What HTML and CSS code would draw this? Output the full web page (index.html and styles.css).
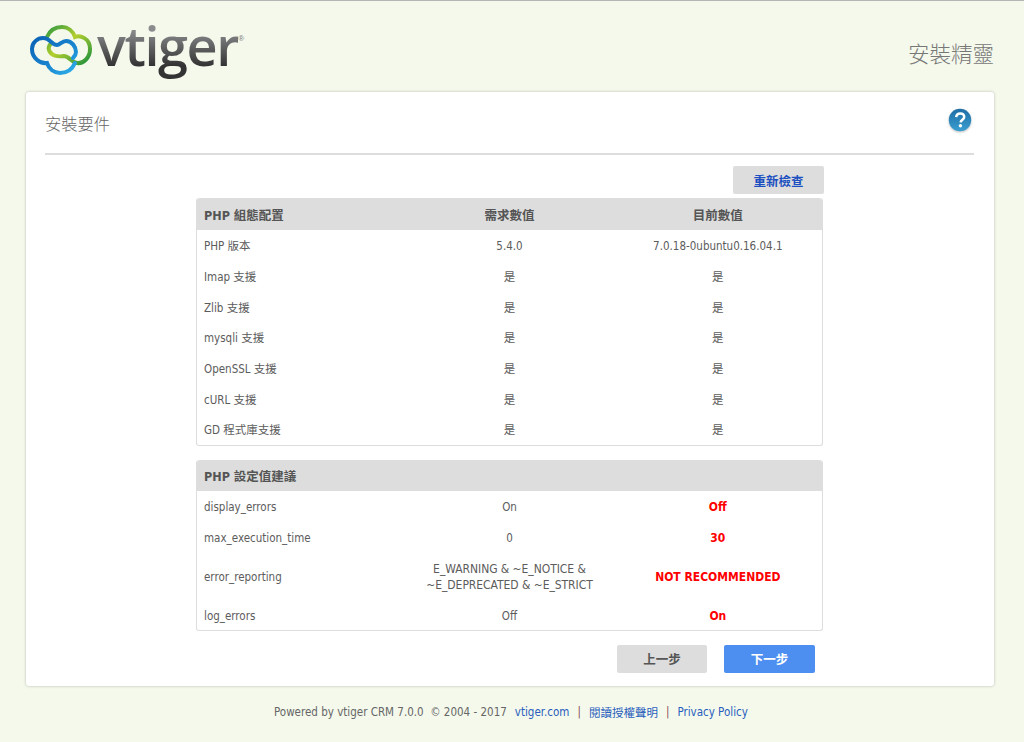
FILE: index.html
```html
<!DOCTYPE html>
<html lang="zh-Hant">
<head>
<meta charset="utf-8">
<title>安裝精靈</title>
<link rel="stylesheet" href="styles.css">
</head>
<body>
<header class="top">
  <div class="logo">
    <svg class="cloud" width="66" height="56" viewBox="29 25 66 56">
      <defs>
        <linearGradient id="g" x1="0" y1="0" x2="1" y2="1"><stop offset="0" stop-color="#2f9a3f"/><stop offset=".45" stop-color="#b4cf2e"/><stop offset="1" stop-color="#1c8f3c"/></linearGradient>
        <linearGradient id="b" x1="0" y1="0" x2="1" y2="1"><stop offset="0" stop-color="#0b62b5"/><stop offset=".6" stop-color="#1a86d0"/><stop offset="1" stop-color="#2fb2ea"/></linearGradient>
      </defs>
      <path d="M47 37C50 30 56 27 62 27C68 27 73 31 75 37C80 35 90 38 90 49C90 58 83 64 77 63C71 62 69 56 64 56C58 57 51 56 49 50C48 47 49 45 52 43" fill="none" stroke="url(#g)" stroke-width="4" stroke-linecap="round"/>
      <path d="M75 63C72 70 66 73 60 73C54 73 49 69 47 63C40 64 32 58 32 49C32 42 38 38 43 38C50 38 52 45 57 45C60 45 62 41 66 41C72 41 76 47 76 52C76 54 75 56 73 58" fill="none" stroke="url(#b)" stroke-width="4" stroke-linecap="round"/>
    </svg>
    <span class="word">vtiger</span><span class="reg">®</span>
  </div>
  <div class="wizard">安裝精靈</div>
</header>

<main class="card">
  <div class="card-head">
    <h1>安裝要件</h1>
    <svg class="help" width="24" height="24" viewBox="0 0 24 24">
      <defs><linearGradient id="h" x1="0" y1="0" x2="0" y2="1"><stop offset="0" stop-color="#1f6ea6"/><stop offset="1" stop-color="#3a9ed0"/></linearGradient></defs>
      <circle cx="12" cy="12" r="11.2" fill="url(#h)"/>
      <path d="M8.2 9.2C8.4 6.6 10 5.4 12.2 5.4C14.6 5.4 16.2 6.8 16.2 8.9C16.2 11.6 12.8 11.8 12.6 14.4" fill="none" stroke="#fff" stroke-width="2.5"/>
      <circle cx="12.4" cy="17.8" r="1.7" fill="#fff"/>
    </svg>
  </div>

  <div class="content">
    <div class="recheck-row"><a class="btn recheck">重新檢查</a></div>

    <table class="req">
      <thead><tr><th class="left">PHP 組態配置</th><th>需求數值</th><th>目前數值</th></tr></thead>
      <tbody>
        <tr><td class="left">PHP 版本</td><td>5.4.0</td><td>7.0.18-0ubuntu0.16.04.1</td></tr>
        <tr><td class="left">Imap 支援</td><td>是</td><td>是</td></tr>
        <tr><td class="left">Zlib 支援</td><td>是</td><td>是</td></tr>
        <tr><td class="left">mysqli 支援</td><td>是</td><td>是</td></tr>
        <tr><td class="left">OpenSSL 支援</td><td>是</td><td>是</td></tr>
        <tr><td class="left">cURL 支援</td><td>是</td><td>是</td></tr>
        <tr><td class="left">GD 程式庫支援</td><td>是</td><td>是</td></tr>
      </tbody>
    </table>

    <table class="req second">
      <thead><tr><th class="left">PHP 設定值建議</th><th></th><th></th></tr></thead>
      <tbody>
        <tr><td class="left">display_errors</td><td>On</td><td class="bad">Off</td></tr>
        <tr><td class="left">max_execution_time</td><td>0</td><td class="bad">30</td></tr>
        <tr class="tall"><td class="left">error_reporting</td><td class="caps">E_WARNING &amp; ~E_NOTICE &amp;<br>~E_DEPRECATED &amp; ~E_STRICT</td><td class="bad">NOT RECOMMENDED</td></tr>
        <tr><td class="left">log_errors</td><td>Off</td><td class="bad">On</td></tr>
      </tbody>
    </table>

    <div class="actions">
      <a class="btn prev">上一步</a>
      <a class="btn next">下一步</a>
    </div>
  </div>
</main>

<footer class="foot">
  <span>Powered by vtiger CRM 7.0.0&nbsp; © 2004 - 2017</span>
  <a>vtiger.com</a><span class="sep">|</span><a>閱讀授權聲明</a><span class="sep">|</span><a>Privacy Policy</a>
</footer>
</body>
</html>
```
FILE: styles.css
```css
* { box-sizing: border-box; }
html, body { height: 100%; }
body {
  margin: 0;
  height: 742px;
  overflow: hidden;
  background: #f4f9ec;
  border-top: 1px solid #b5b5b5;
  color: #555;
  font-family: Tahoma, "DejaVu Sans Condensed", "Noto Sans", "Noto Sans CJK TC", sans-serif;
  font-size: 11.5px;
}
.top {
  height: 91px;
  padding: 0 30px 0 29px;
  display: flex;
  justify-content: space-between;
}
.logo { display: flex; align-items: flex-start; padding-top: 24px; }
.cloud { flex: none; margin-right: 2px; }
.word {
  margin-top: -13px;
  font-family: "Open Sans", sans-serif;
  font-weight: 600;
  font-size: 54px;
  line-height: 66px;
  height: 72px;
  letter-spacing: -1.4px;
  background: linear-gradient(#8a8b8d 25%, #333 75%);
  -webkit-background-clip: text;
  background-clip: text;
  color: transparent;
}
.reg { font-size: 8px; color: #777; margin-top: 9px; font-family: "Liberation Sans", sans-serif; }
.wizard {
  padding-top: 38px;
  font-size: 21.5px;
  line-height: 28px;
  color: #777;
  font-family: "Noto Sans CJK TC", sans-serif;
  font-weight: 300;
}
.card {
  margin: 0 30px 0 26px;
  height: 594px;
  background: #fff;
  border-radius: 3px;
  box-shadow: 0 0 3px rgba(0,0,0,.25);
  padding: 0 20px 0 19px;
}
.card-head {
  height: 63px;
  border-bottom: 2px solid #ddd;
  display: flex;
  justify-content: space-between;
  align-items: flex-start;
}
.card-head h1 {
  margin: 20px 0 0;
  font-family: "Noto Sans CJK TC", sans-serif;
  font-weight: 300;
  font-size: 16.25px;
  line-height: 22px;
  color: #666;
}
.help { margin: 16px 2px 0 0; filter: drop-shadow(0 1px 1px rgba(0,0,0,.25)); }
.content { margin: 0 150px 0 151px; }
.recheck-row { display: flex; justify-content: flex-end; padding-top: 11px; }
.btn {
  display: flex;
  align-items: center;
  justify-content: center;
  height: 28px;
  border-radius: 2px;
  font-weight: bold;
  font-family: "Noto Sans CJK TC", sans-serif;
  font-size: 12.5px;
}
.recheck { width: 91px; background: #ddd; color: #1c4fc0; }
.req {
  width: 627px;
  border-collapse: separate;
  border-spacing: 0;
  table-layout: fixed;
  margin-top: 4px;
  border: 1px solid #ddd;
  border-top: 0;
  border-radius: 3px;
}
.second { margin-top: 14px; }
.req th {
  height: 32px;
  padding: 0;
  background: #ddd;
  color: #555;
  font-weight: bold;
  font-size: 12.5px;
}
.second th { height: 31px; }
.req th:first-child { border-top-left-radius: 3px; }
.req th:last-child { border-top-right-radius: 3px; }
.req td {
  height: 30.7px;
  padding: 2px 0 0;
  text-align: center;
  font-size: 11.5px;
  line-height: 16px;
  color: #5c5c5c;
}
.req .tall td { height: 47px; }
.req .left { text-align: left; padding-left: 7px; }
.req .caps { font-size: 12px; letter-spacing: -.05px; }
.req .bad { color: #f00; font-weight: bold; font-size: 12px; }
.actions { display: flex; justify-content: flex-end; gap: 17px; margin-top: 14px; margin-right: 9px; }
.prev { width: 90px; }
.next { width: 91px; }
.prev { background: #ddd; color: #555; }
.next { background: #4d8ff0; color: #fff; }
.foot {
  margin-top: 18px;
  padding-left: 274px;
  display: flex;
  align-items: center;
  height: 16px;
  font-size: 11.5px;
  color: #666;
}
.foot a { color: #2a5dbd; }
.foot span:first-child { margin-right: 8px; }
.sep { margin: 0 8px; color: #8a4a5a; }
```
